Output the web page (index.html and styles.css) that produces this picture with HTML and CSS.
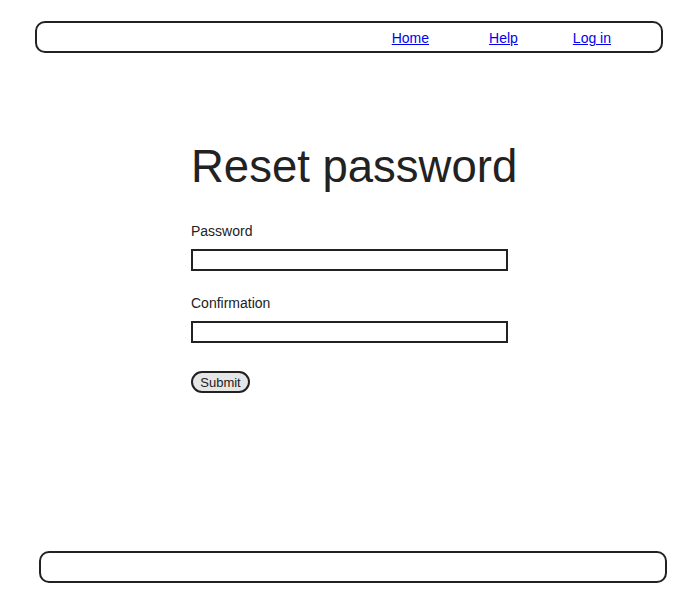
FILE: index.html
```html
<!DOCTYPE html>
<html>
<head>
<meta charset="utf-8">
<link rel="stylesheet" href="styles.css">
</head>
<body>
<header class="topbar">
  <nav class="nav">
    <a href="#" class="nav-link nav-home">Home</a>
    <a href="#" class="nav-link nav-help">Help</a>
    <a href="#" class="nav-link nav-login">Log in</a>
  </nav>
</header>
<main class="content">
  <h1 class="title">Reset password</h1>
  <form class="form">
    <label class="label" for="pw">Password</label>
    <input class="field" id="pw" type="password">
    <label class="label" for="pc">Confirmation</label>
    <input class="field" id="pc" type="password">
    <button class="submit" type="button">Submit</button>
  </form>
</main>
<footer class="bottombar"></footer>
</body>
</html>
```
FILE: styles.css
```css
html, body {
  margin: 0;
  padding: 0;
  background: #fff;
}
body {
  font-family: "Liberation Sans", Arial, sans-serif;
  color: #222;
  width: 700px;
  height: 600px;
  overflow: hidden;
}
.topbar {
  margin: 21px 37px 0 35px;
  height: 28px;
  border: 2px solid #222;
  border-radius: 10px;
  display: flex;
  align-items: center;
  justify-content: flex-end;
}
.nav {
  display: flex;
  align-items: center;
  padding-right: 50px;
  padding-top: 2px;
  font-size: 14px;
}
.nav-link {
  color: #0000ee;
  text-decoration: underline;
}
.nav-help { margin-left: 60px; }
.nav-login { margin-left: 55px; }
.content {
  margin-left: 191px;
}
.title {
  margin: 88px 0 0 0;
  font-size: 45.5px;
  font-weight: normal;
  line-height: 52px;
  white-space: nowrap;
}
.form {
  display: flex;
  flex-direction: column;
  align-items: flex-start;
  margin-top: 30px;
}
.label {
  font-size: 14px;
  line-height: 16px;
  margin-bottom: 10px;
}
.field {
  box-sizing: border-box;
  width: 317px;
  height: 22px;
  margin: 0 0 24px 0;
  border: 2px solid #222;
  border-radius: 0;
  padding: 0 4px;
  background: #fff;
}
.form .field:last-of-type {
  margin-bottom: 28px;
}
.submit {
  box-sizing: border-box;
  height: 22px;
  width: 59px;
  padding: 0;
  font-family: "Liberation Sans", Arial, sans-serif;
  font-size: 13px;
  color: #222;
  background: #e6e6e6;
  border: 2px solid #222;
  border-radius: 11px;
}
.bottombar {
  margin: 158px 33px 0 39px;
  height: 28px;
  border: 2px solid #222;
  border-radius: 10px;
}
```
